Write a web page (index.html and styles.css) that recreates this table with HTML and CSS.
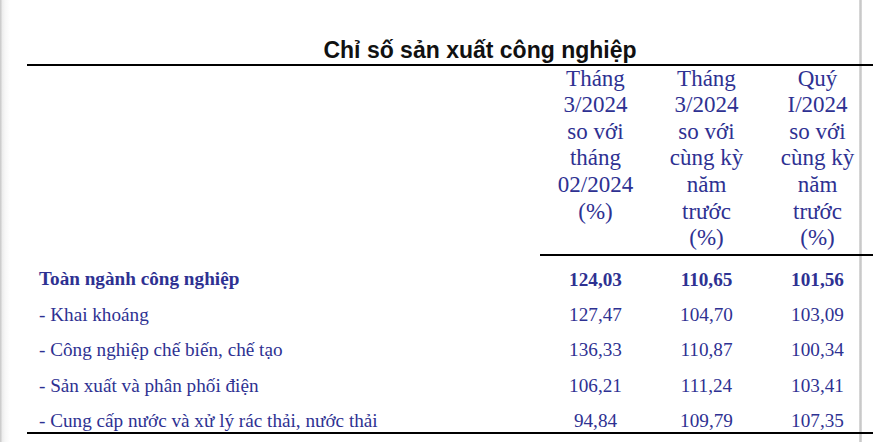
FILE: index.html
```html
<!DOCTYPE html>
<html lang="vi">
<head>
<meta charset="utf-8">
<title>Chỉ số sản xuất công nghiệp</title>
<link rel="stylesheet" href="styles.css">
</head>
<body>
<div class="page">
  <div class="sheet">
    <h1 class="title">Chỉ số sản xuất công nghiệp</h1>
    <table class="report">
      <colgroup>
        <col class="col-name">
        <col class="col-num">
        <col class="col-num">
        <col class="col-num">
      </colgroup>
      <thead>
        <tr>
          <th class="blank"></th>
          <th class="head">Tháng 3/2024 so với tháng 02/2024 (%)</th>
          <th class="head">Tháng 3/2024 so với cùng kỳ năm trước (%)</th>
          <th class="head">Quý I/2024 so với cùng kỳ năm trước (%)</th>
        </tr>
      </thead>
      <tbody>
        <tr class="total">
          <td class="name">Toàn ngành công nghiệp</td>
          <td class="num">124,03</td>
          <td class="num">110,65</td>
          <td class="num">101,56</td>
        </tr>
        <tr>
          <td class="name">- Khai khoáng</td>
          <td class="num">127,47</td>
          <td class="num">104,70</td>
          <td class="num">103,09</td>
        </tr>
        <tr>
          <td class="name">- Công nghiệp chế biến, chế tạo</td>
          <td class="num">136,33</td>
          <td class="num">110,87</td>
          <td class="num">100,34</td>
        </tr>
        <tr>
          <td class="name">- Sản xuất và phân phối điện</td>
          <td class="num">106,21</td>
          <td class="num">111,24</td>
          <td class="num">103,41</td>
        </tr>
        <tr class="last">
          <td class="name">- Cung cấp nước và xử lý rác thải, nước thải</td>
          <td class="num">94,84</td>
          <td class="num">109,79</td>
          <td class="num">107,35</td>
        </tr>
      </tbody>
    </table>
  </div>
</div>
</body>
</html>
```

FILE: styles.css
```css
html, body {
  margin: 0;
  padding: 0;
}

body {
  min-height: 100vh;
  overflow: hidden;
  background:
    linear-gradient(to right,
      transparent 859px,
      #e2e2e2 859px,
      #c9c9c9 860px,
      #c9c9c9 861px,
      #e2e2e2 862px,
      transparent 862px),
    linear-gradient(to right,
      #cdcdcd 0,
      #cdcdcd 1px,
      #ececec 2px,
      #f7f7f7 5px,
      #ffffff 10px);
  font-family: "Liberation Serif", "Times New Roman", serif;
}

.page {
  padding: 37px 0 0 27px;
}

.sheet {
  width: 846px;
}

.title {
  margin: 0;
  padding: 0 0 0 60px;
  text-align: center;
  font-family: "Liberation Sans", Arial, sans-serif;
  font-weight: bold;
  font-size: 23px;
  line-height: 26.6px;
  color: #111111;
  border-bottom: 2.4px solid #000000;
}

.report {
  width: 846px;
  border-collapse: collapse;
  table-layout: fixed;
  color: #2e3192;
  border-bottom: 2.4px solid #000000;
}

.col-name {
  width: 513px;
}

.col-num {
  width: 111px;
}

.report th {
  font-weight: normal;
  vertical-align: top;
  padding: 0;
}

.report th.head {
  font-size: 23px;
  line-height: 26.6px;
  text-align: center;
  padding: 0 14px 2px;
  border-bottom: 2.4px solid #000000;
}

.report td {
  font-size: 19.2px;
  line-height: 22px;
  padding: 13.2px 0 0;
  vertical-align: top;
}

.report td.name {
  padding-left: 12px;
  white-space: nowrap;
}

.report td.num {
  text-align: center;
}

.report tr.total td {
  font-weight: bold;
}
```
